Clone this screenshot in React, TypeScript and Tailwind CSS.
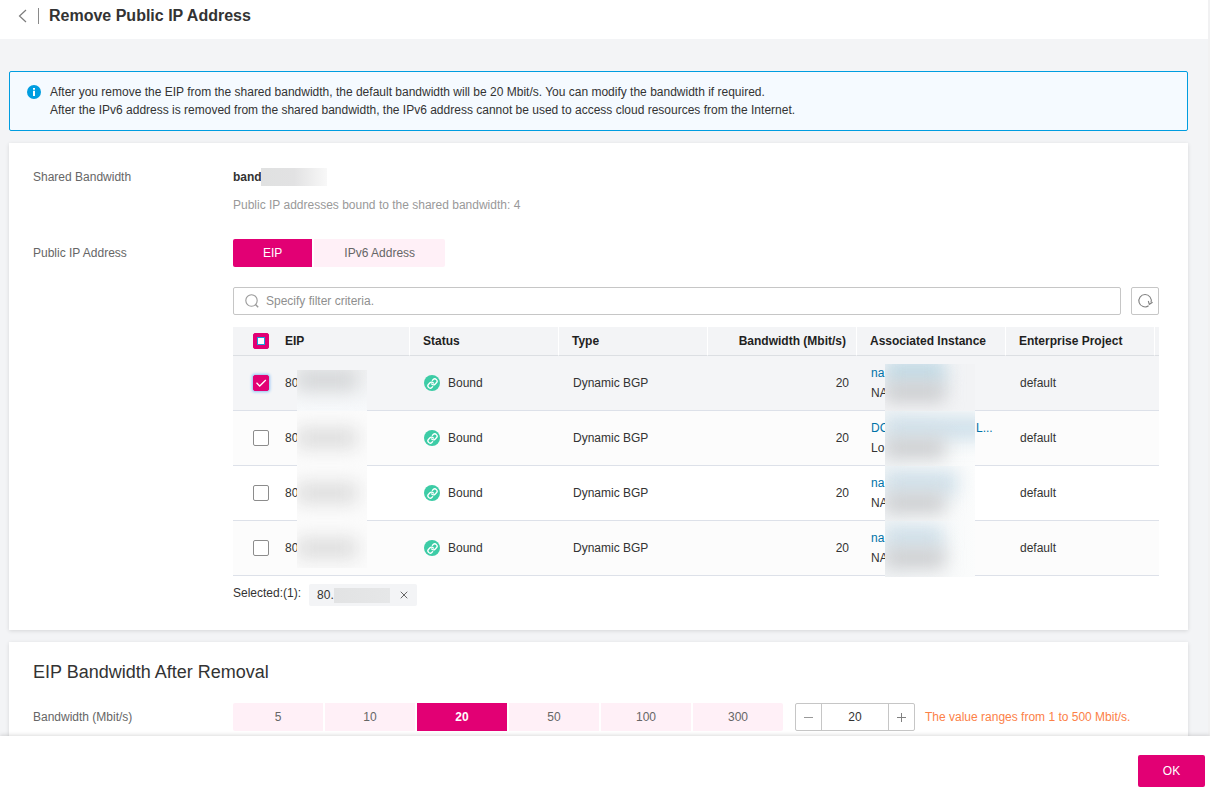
import { useState } from 'react'
import { Link, X } from 'lucide-react'
import clsx from 'clsx'

const rows = [
  { id: 'eip-1', name: 'na', kind: 'NA' },
  { id: 'eip-2', name: 'DC', kind: 'Lo', tail: 'L...' },
  { id: 'eip-3', name: 'na', kind: 'NA' },
  { id: 'eip-4', name: 'na', kind: 'NA' },
]

const headings = ['Status', 'Type', 'Bandwidth (Mbit/s)', 'Associated Instance', 'Enterprise Project']

const presets = [5, 10, 20, 50, 100, 300]

function InfoIcon() {
  return (
    <svg viewBox="0 0 14 14" className="mt-[2px] size-[14px] flex-none" aria-hidden="true">
      <circle cx="7" cy="7" r="7" fill="#009de0" />
      <path d="M6 3h2v1.700H6zM6 5.700h2V11H6z" fill="#fff" />
    </svg>
  )
}

function SearchIcon() {
  return (
    <svg viewBox="0 0 14 14" className="size-[14px] flex-none" fill="none" stroke="#999" aria-hidden="true">
      <circle cx="6.500" cy="6.500" r="5.700" strokeWidth="1.100" />
      <path d="M10.500 10.500 13.200 13.200" strokeWidth="1.400" />
    </svg>
  )
}

function RefreshIcon() {
  return (
    <svg viewBox="0 0 16 16" className="size-4" fill="none" stroke="#808080" aria-hidden="true">
      <path d="M11.600 12.800A6.200 6.200 0 1 1 14 9.500" strokeWidth="1.100" />
      <path d="M15.600 9.300 12.300 11.300 11.300 8" strokeWidth="1.100" />
    </svg>
  )
}

type CheckboxProps = {
  label: string
  checked: boolean
  partial?: boolean
  onChange: () => void
}

function Checkbox({ label, checked, partial, onChange }: CheckboxProps) {
  return (
    <span className="ml-5 grid size-4 place-items-center">
      <input
        type="checkbox"
        aria-label={label}
        checked={checked}
        onChange={onChange}
        className={clsx(
          'col-start-1 row-start-1 size-4 appearance-none rounded-xs border',
          checked || partial ? 'border-[#e20074] bg-[#e20074]' : 'border-[#8c8c8c] bg-white',
          checked && !partial && 'shadow-[0_0_3px_1px_#8fc2f5]',
        )}
      />
      {partial && (
        <span className="pointer-events-none col-start-1 row-start-1 size-2 border border-[#1a9be0] bg-white" />
      )}
      {checked && !partial && (
        <svg
          viewBox="0 0 16 16"
          className="pointer-events-none col-start-1 row-start-1 size-4"
          fill="none"
          stroke="#fff"
          strokeWidth="1.300"
          aria-hidden="true"
        >
          <path d="m3.500 7.800 3.200 3.200L12.800 5" />
        </svg>
      )}
    </span>
  )
}

function Header() {
  return (
    <header className="flex-none bg-white pb-[7px]">
      <div className="flex h-8 items-center pl-[18px]">
        <button type="button" aria-label="Back">
          <svg viewBox="0 0 9 14" className="h-[14px] w-[9px]" fill="none" stroke="#7c7c7c" strokeWidth="1.200">
            <path d="M8 1 1.500 7 8 13" />
          </svg>
        </button>
        <span className="ml-[11px] h-4 w-px bg-[#8a8a8a]" />
        <h1 className="ml-[10px] text-base font-bold">Remove Public IP Address</h1>
      </div>
    </header>
  )
}

function AddressTable() {
  const [selected, setSelected] = useState(['eip-1'])

  const toggle = (id: string) =>
    setSelected((ids) => (ids.includes(id) ? ids.filter((i) => i !== id) : [...ids, id]))

  const all = selected.length === rows.length

  return (
    <>
      <table className="mt-3 w-full table-fixed border-separate border-spacing-0 text-left">
        <colgroup>
          <col className="w-[52px]" />
          <col className="w-[125px]" />
          <col span={5} />
          <col className="w-1" />
        </colgroup>
        <thead className="bg-[#f3f4f6] text-[#1f1f1f]">
          <tr className="h-[29px]">
            <th className="border-b border-[#dcdfe3] p-0">
              <Checkbox
                label="Select all"
                checked={all}
                partial={selected.length > 0 && !all}
                onChange={() => setSelected(all ? [] : rows.map((row) => row.id))}
              />
            </th>
            <th className="border-r border-b border-r-white border-b-[#dcdfe3] p-0">EIP</th>
            {headings.map((heading) => (
              <th
                key={heading}
                className={clsx(
                  'border-r border-b border-r-white border-b-[#dcdfe3] p-0 whitespace-nowrap',
                  heading.startsWith('Bandwidth') ? 'pr-[10px] text-right' : 'pl-[13px]',
                )}
              >
                {heading}
              </th>
            ))}
            <td className="border-b border-[#dcdfe3] p-0" />
          </tr>
        </thead>
        <tbody className="[&_td]:border-b [&_td]:border-[#dde1e9]">
          {rows.map((row, i) => {
            const first = i === 0
            const last = i === rows.length - 1
            return (
              <tr
                key={row.id}
                className={clsx('h-[55px]', selected.includes(row.id) ? 'bg-[#f4f5f7]' : i % 2 ? 'bg-[#fcfcfc]' : 'bg-white')}
              >
                <td className="p-0">
                  <Checkbox
                    label={`Select address ${i + 1}`}
                    checked={selected.includes(row.id)}
                    onChange={() => toggle(row.id)}
                  />
                </td>
                <td className="relative p-0">
                  80
                  <span
                    className={clsx(
                      'absolute left-3 w-[70px] overflow-hidden',
                      first ? 'top-[14px] bg-linear-to-b from-[#f0f1f2] to-[#f7f9fb]' : 'top-0 bg-[#fbfbfb]',
                      last ? 'bottom-[7px]' : '-bottom-px',
                    )}
                  >
                    <span
                      className={clsx(
                        'absolute left-0 h-5 w-[60px] blur-[9px]',
                        first ? 'top-0 bg-[#d2d4d6]' : 'top-[17px] bg-[#dcdcdc]',
                      )}
                    />
                  </span>
                </td>
                <td className="p-0 pl-[14px]">
                  <span className="flex items-center gap-2">
                    <span className="grid size-4 place-items-center rounded-full bg-[#3dcca6] text-white">
                      <Link className="size-[11px]" strokeWidth={3} aria-hidden="true" />
                    </span>
                    Bound
                  </span>
                </td>
                <td className="p-0 pl-[14px]">Dynamic BGP</td>
                <td className="p-0 pr-2 text-right">20</td>
                <td className="relative p-0 pl-[14px]">
                  <a href="#" className="flex text-[#0073a8]">
                    <span className="w-[105px]">{row.name}</span>
                    {row.tail}
                  </a>
                  <p>{row.kind}</p>
                  <span
                    className={clsx(
                      'absolute left-7 w-[90px] overflow-hidden',
                      first ? 'top-2 bg-[#f2f3f5]' : 'top-0 bg-linear-to-r from-[#f1f4f6] to-[#fbfcfc]',
                      last ? '-bottom-[2px]' : '-bottom-px',
                    )}
                  >
                    <span
                      className={clsx(
                        'absolute left-0 h-6 blur-[9px]',
                        first ? '-top-1 w-[60px] bg-[#bfd9e5]' : 'top-[5px] bg-[#cfe0ea]',
                        !first && (row.tail ? 'w-[110px]' : last ? 'w-[58px]' : 'w-[72px]'),
                      )}
                    />
                    <span
                      className={clsx(
                        'absolute left-0 h-5 w-[60px] bg-[#cbccce] blur-[9px]',
                        first ? 'top-[18px]' : 'top-[27px]',
                      )}
                    />
                  </span>
                </td>
                <td className="p-0 pl-[14px]">default</td>
                <td className="p-0" />
              </tr>
            )
          })}
        </tbody>
      </table>
      <div className="mt-2 flex items-start gap-2">
        <span className="leading-[18px]">Selected:({selected.length}):</span>
        <span className="flex h-[22px] items-center rounded-xs bg-[#f3f4f6] pr-[7px] pl-2">
          80.
          <span className="h-[15px] w-14 bg-linear-to-r from-[#e2e3e4] to-[#e6e7e8]" />
          <button type="button" aria-label="Remove from selection" className="ml-2 text-[#666]">
            <X className="size-3" strokeWidth={2} />
          </button>
        </span>
      </div>
    </>
  )
}

function AddressCard() {
  const [tab, setTab] = useState('EIP')

  return (
    <section className="mt-3 grid grid-cols-[200px_1fr] bg-white pt-6 pr-[29px] pb-6 pl-6 shadow-[0_1px_4px_rgba(0,0,0,0.12)]">
      <span className="text-[#666]">Shared Bandwidth</span>
      <div>
        <div className="flex items-center font-bold">
          <span className="w-7">band</span>
          <span className="h-[18px] w-[66px] bg-linear-to-r from-[#e0e1e1] via-[#e2e2e3] to-[#f8f8f8]" />
        </div>
        <p className="mt-2 text-[#999]">Public IP addresses bound to the shared bandwidth: 4</p>
      </div>

      <span className="mt-6 leading-7 text-[#666]">Public IP Address</span>
      <div className="mt-6 min-w-0">
        <div className="flex gap-[2px]">
          {['EIP', 'IPv6 Address'].map((name) => (
            <button
              key={name}
              type="button"
              onClick={() => setTab(name)}
              className={clsx(
                'h-7 px-[30px] first:rounded-l-xs last:rounded-r-xs',
                tab === name ? 'bg-[#e20074] text-white' : 'bg-[#fff0f7] text-[#666]',
              )}
            >
              {name}
            </button>
          ))}
        </div>
        <div className="mt-5 flex gap-[10px]">
          <label className="flex h-7 flex-1 items-center gap-[7px] rounded-xs border border-[#c6c6c6] px-[11px]">
            <SearchIcon />
            <input
              type="text"
              aria-label="Filter"
              placeholder="Specify filter criteria."
              className="min-w-0 flex-1 outline-none placeholder:text-[#8f8f8f]"
            />
          </label>
          <button
            type="button"
            aria-label="Refresh"
            className="grid size-7 place-items-center rounded-xs border border-[#c6c6c6]"
          >
            <RefreshIcon />
          </button>
        </div>
        <AddressTable />
      </div>
    </section>
  )
}

function BandwidthCard() {
  const [value, setValue] = useState(20)

  return (
    <section className="mt-3 bg-white pt-4 pr-[29px] pb-6 pl-6 shadow-[0_1px_4px_rgba(0,0,0,0.12)]">
      <h2 className="text-lg">EIP Bandwidth After Removal</h2>
      <div className="mt-[17px] grid grid-cols-[200px_1fr] items-center">
        <label htmlFor="bandwidth" className="text-[#666]">
          Bandwidth (Mbit/s)
        </label>
        <div className="flex items-center">
          <div className="flex gap-[2px]">
            {presets.map((preset) => (
              <button
                key={preset}
                type="button"
                onClick={() => setValue(preset)}
                className={clsx(
                  'h-7 w-[90px] first:rounded-l-xs last:rounded-r-xs',
                  preset === value ? 'bg-[#e20074] font-bold text-white' : 'bg-[#fff0f7] text-[#666]',
                )}
              >
                {preset}
              </button>
            ))}
          </div>
          <div className="ml-3 flex h-7 w-[120px] rounded-xs border border-[#c6c6c6]">
            <button
              type="button"
              aria-label="Decrease"
              onClick={() => setValue(Math.max(1, value - 1))}
              className="grid w-[25px] place-items-center"
            >
              <svg viewBox="0 0 9 9" className="size-[9px]" stroke="#999" aria-hidden="true">
                <path d="M0 4.500h9" />
              </svg>
            </button>
            <input
              id="bandwidth"
              type="text"
              value={value}
              onChange={(e) => setValue(Number(e.target.value) || 1)}
              className="min-w-0 flex-1 border-x border-[#c6c6c6] text-center outline-none"
            />
            <button
              type="button"
              aria-label="Increase"
              onClick={() => setValue(Math.min(500, value + 1))}
              className="grid w-[25px] place-items-center"
            >
              <svg viewBox="0 0 9 9" className="size-[9px]" stroke="#808080" aria-hidden="true">
                <path d="M0 4.500h9M4.500 0v9" />
              </svg>
            </button>
          </div>
          <span className="ml-[10px] text-[#fc8147]">The value ranges from 1 to 500 Mbit/s.</span>
        </div>
      </div>
    </section>
  )
}

export default function App() {
  return (
    <div className="flex h-screen flex-col bg-white font-['Liberation_Sans',Arial,sans-serif] text-xs/5 text-[#333]">
      <div className="flex min-h-0 flex-1 flex-col border-r-2 border-[#f1f1f2]">
        <Header />
        <main className="min-h-0 flex-1 overflow-y-auto bg-[#f3f4f6] pt-8 pr-5 pl-[9px] [scrollbar-width:none]">
          <div className="flex gap-[9px] rounded-xs border border-[#009de0] bg-[#f5faff] px-[17px] py-[11px] leading-[18px]">
            <InfoIcon />
            <div>
              <p>
                After you remove the EIP from the shared bandwidth, the default bandwidth will be 20 Mbit/s. You can
                modify the bandwidth if required.
              </p>
              <p>
                After the IPv6 address is removed from the shared bandwidth, the IPv6 address cannot be used to access
                cloud resources from the Internet.
              </p>
            </div>
          </div>
          <AddressCard />
          <BandwidthCard />
        </main>
      </div>
      <footer className="relative flex h-[60px] flex-none items-start justify-end bg-white pt-[19px] pr-[5px] shadow-[0_-1px_4px_rgba(0,0,0,0.14)]">
        <button type="button" className="h-8 w-[67px] rounded-xs bg-[#e20074] text-white">
          OK
        </button>
      </footer>
    </div>
  )
}
